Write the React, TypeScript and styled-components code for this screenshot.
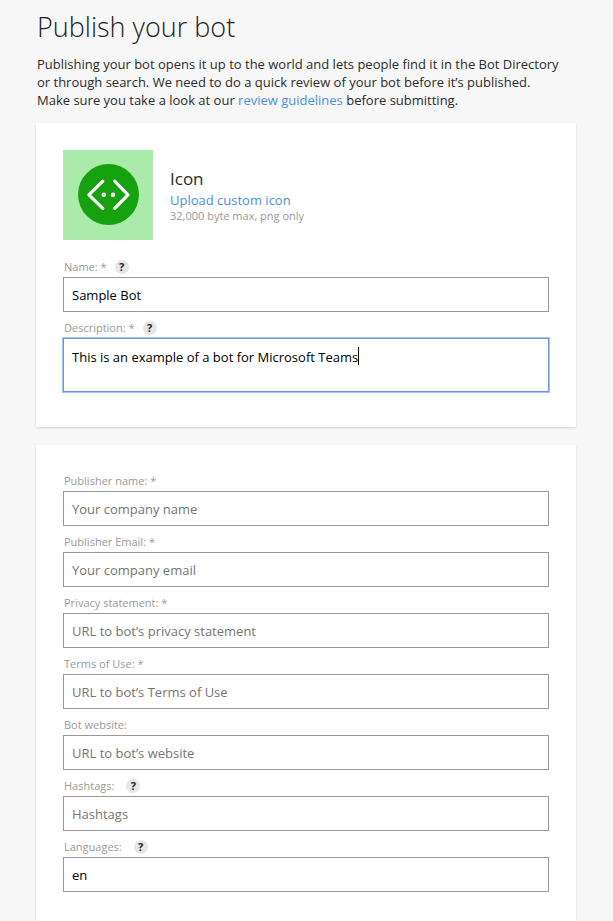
import React, { useEffect, useRef, useState } from "react";
import styled, { createGlobalStyle } from "styled-components";

const GlobalStyle = createGlobalStyle`
  *, *::before, *::after { box-sizing: border-box; }
  body {
    margin: 0;
    background: #f7f7f7;
    color: #2b2b2b;
    font-family: "Open Sans", "Noto Sans", sans-serif;
    font-size: 13px;
    line-height: 18px;
  }
`;

const Page = styled.main`
  display: flex;
  flex-direction: column;
  gap: 18px;
  padding: 8px 37px 0 36px;
`;

const Intro = styled.header`
  display: flex;
  flex-direction: column;
  gap: 9px;
  margin: 0 0 -4px 1px;
`;

const Title = styled.h1`
  margin: 0;
  color: #222;
  font-size: 27px;
  line-height: 38px;
  font-weight: 300;
`;

const Lead = styled.p`
  margin: 0;
`;

const Link = styled.a`
  color: #4a90e2;
  text-decoration: none;
`;

const Card = styled.section`
  display: flex;
  flex-direction: column;
  gap: 7px;
  padding: 27px 27px 35px;
  background: #fff;
  box-shadow: 0 1px 2px rgba(0, 0, 0, 0.14);
`;

const IconRow = styled.div`
  display: flex;
  align-items: center;
  gap: 17px;
  margin-bottom: 11px;
`;

const BotIcon = styled.svg`
  flex: none;
  width: 90px;
  height: 90px;
`;

const IconText = styled.div`
  display: flex;
  flex-direction: column;
  align-items: flex-start;
`;

const IconTitle = styled.h2`
  margin: 0;
  font-size: 17px;
  line-height: 24px;
  font-weight: 400;
`;

const Hint = styled.span`
  color: #999;
  font-size: 11px;
  line-height: 14px;
`;

const FieldBox = styled.div`
  display: flex;
  flex-direction: column;
`;

const LabelRow = styled.div<{ $wide?: boolean }>`
  display: flex;
  align-items: center;
  gap: ${(p) => (p.$wide ? 12 : 8)}px;
  height: 19px;
  padding: 0 0 2px 1px;
`;

const Label = styled.label`
  color: #999;
  font-size: 11px;
  line-height: 16px;
`;

const Help = styled.button`
  width: 14px;
  height: 14px;
  padding: 0;
  border: 0;
  border-radius: 50%;
  background: #e6e6e6;
  color: #222;
  font: 700 11px/14px "Open Sans", "Noto Sans", sans-serif;
`;

const TextInput = styled.input`
  width: 100%;
  height: 35px;
  padding: 1px 8px 0;
  border: 1px solid #999;
  border-radius: 0;
  background: #fff;
  color: #000;
  font: inherit;
  &::placeholder { color: #757575; opacity: 1; }
`;

const AreaWrap = styled.div`
  position: relative;
  display: flex;
`;

const Area = styled.textarea`
  width: 100%;
  height: 54px;
  padding: 9px 8px;
  border: 1px solid #6f94d2;
  border-radius: 0;
  outline: none;
  box-shadow: 0 0 0 1px #a6c6f7;
  background: #fff;
  color: #000;
  caret-color: transparent;
  font: inherit;
  resize: none;
`;

const Caret = styled.span`
  position: absolute;
  top: 9px;
  width: 1px;
  height: 18px;
  background: #000;
  pointer-events: none;
`;

type FieldProps = {
  id: string;
  label: string;
  placeholder?: string;
  value?: string;
  required?: boolean;
  help?: boolean;
  children?: React.ReactNode;
};

function Field({ id, label, placeholder, value, required, help, children }: FieldProps) {
  return (
    <FieldBox>
      <LabelRow $wide={!required}>
        <Label htmlFor={id}>{label}:{required ? " *" : ""}</Label>
        {help && <Help type="button" aria-label={"Help: " + label}>?</Help>}
      </LabelRow>
      {children ?? <TextInput id={id} type="text" placeholder={placeholder} defaultValue={value} />}
    </FieldBox>
  );
}

function Description() {
  const ref = useRef<HTMLTextAreaElement>(null);
  const [text, setText] = useState("This is an example of a bot for Microsoft Teams");
  const [caretX, setCaretX] = useState(0);

  useEffect(() => {
    const area = ref.current;
    if (!area) return;
    area.focus();
    area.setSelectionRange(area.value.length, area.value.length);
  }, []);

  // Place the caret after the measured width of the text.
  useEffect(() => {
    const area = ref.current;
    const ctx = document.createElement("canvas").getContext("2d");
    if (!area || !ctx) return;
    const style = getComputedStyle(area);
    ctx.font = `${style.fontSize} ${style.fontFamily}`;
    setCaretX(Math.round(ctx.measureText(text).width) + 9);
  }, [text]);

  return (
    <AreaWrap>
      <Area id="description" ref={ref} value={text} onChange={(e) => setText(e.target.value)} />
      <Caret style={{ left: caretX }} />
    </AreaWrap>
  );
}

const publisherFields: FieldProps[] = [
  { id: "publisher", label: "Publisher name", placeholder: "Your company name", required: true },
  { id: "email", label: "Publisher Email", placeholder: "Your company email", required: true },
  { id: "privacy", label: "Privacy statement", placeholder: "URL to bot’s privacy statement", required: true },
  { id: "terms", label: "Terms of Use", placeholder: "URL to bot’s Terms of Use", required: true },
  { id: "website", label: "Bot website", placeholder: "URL to bot’s website" },
  { id: "hashtags", label: "Hashtags", placeholder: "Hashtags", help: true },
  { id: "languages", label: "Languages", value: "en", help: true },
];

export default function App() {
  return (
    <>
      <GlobalStyle />
      <Page>
        <Intro>
          <Title>Publish your bot</Title>
          <Lead>
            Publishing your bot opens it up to the world and lets people find it in the Bot Directory
            <br />
            or through search. We need to do a quick review of your bot before it’s published.
            <br />
            Make sure you take a look at our <Link href="#guidelines">review guidelines</Link> before submitting.
          </Lead>
        </Intro>
        <Card>
          <IconRow>
            <BotIcon viewBox="0 0 90 90" aria-hidden="true">
              <rect width="90" height="90" fill="#aaeaaa" />
              <circle cx="45.5" cy="44.5" r="30.5" fill="#16a10e" />
              <path d="M39.8 31.2 L25.9 44.8 L39.8 58.4 M51.7 31.2 L65 44.8 L51.7 58.4" fill="none" stroke="#fff" strokeWidth="3.2" strokeLinecap="round" strokeLinejoin="round" />
              <circle cx="40.8" cy="44.7" r="2.3" fill="#fff" />
              <circle cx="50" cy="44.7" r="2.3" fill="#fff" />
            </BotIcon>
            <IconText>
              <IconTitle>Icon</IconTitle>
              <Link href="#upload">Upload custom icon</Link>
              <Hint>32,000 byte max, png only</Hint>
            </IconText>
          </IconRow>
          <Field id="name" label="Name" value="Sample Bot" required help />
          <Field id="description" label="Description" required help>
            <Description />
          </Field>
        </Card>
        <Card>
          {publisherFields.map((f) => (
            <Field key={f.id} {...f} />
          ))}
        </Card>
      </Page>
    </>
  );
}
